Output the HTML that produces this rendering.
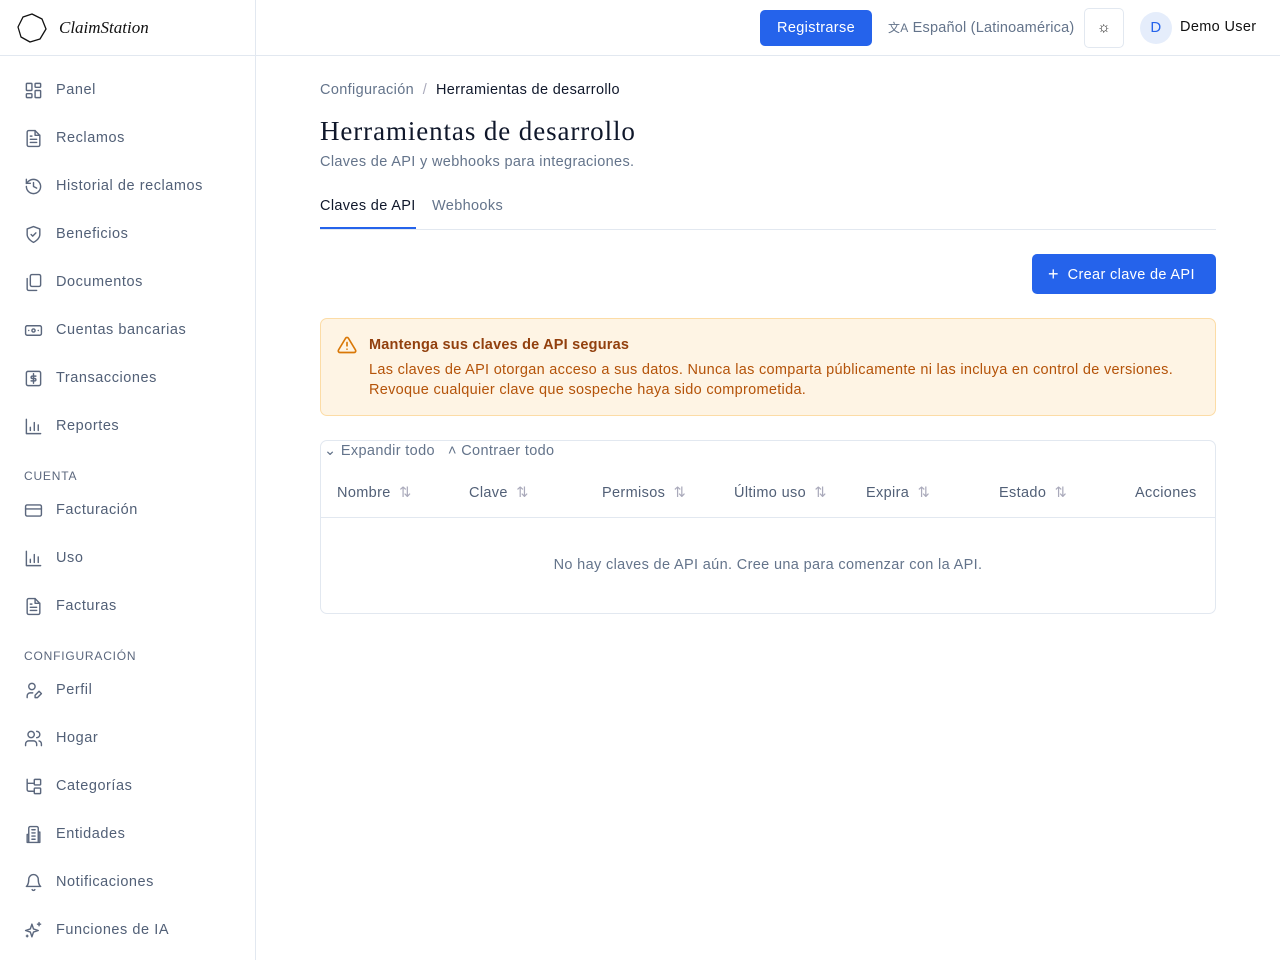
<!DOCTYPE html>
<html><head><meta charset="utf-8"><style>
*{box-sizing:border-box;margin:0;padding:0}
body{width:1280px;height:960px;font-family:"Liberation Sans",sans-serif;background:#fff;color:#0f172a;position:relative;overflow:hidden;letter-spacing:.35px}
.sb{position:absolute;left:0;top:0;width:256px;height:960px;border-right:1px solid #e2e8f0}
.logo{height:56px;border-bottom:1px solid #e2e8f0;position:relative}
.nav{position:absolute;left:24px;font-size:14.5px;color:#526077;display:flex;align-items:center;height:20px;letter-spacing:.55px}
.nav svg{width:19px;height:19px;margin-right:13px;fill:none;stroke:#5b677d;stroke-width:1.8;stroke-linecap:round;stroke-linejoin:round}
.sec{position:absolute;left:24px;font-size:12px;color:#5b677d;letter-spacing:.8px}
.top{position:absolute;left:256px;top:0;right:0;height:56px;border-bottom:1px solid #e2e8f0}
.abs{position:absolute}
.th{position:absolute;top:485px;font-size:14.5px;color:#526077;white-space:nowrap}
.th span{color:#aab;margin-left:4px}
</style></head><body>
<div class="sb">
 <div class="logo">
  <svg class="abs" style="left:16px;top:12px" width="32" height="32" viewBox="0 0 32 32" fill="none" stroke="#111" stroke-width="1.3"><path d="M16 2 L26 7 L30 17 L24 27 L14 30 L5 25 L2 15 L7 5 Z" stroke-linejoin="round"/></svg>
  <div class="abs" style="left:59px;top:18px;font-family:'Liberation Serif',serif;font-style:italic;font-size:17px;color:#111;letter-spacing:0">ClaimStation</div>
 </div>
 <div class="nav" style="top:80px"><svg viewBox="0 0 24 24"><rect x="3" y="3" width="7" height="9" rx="1"/><rect x="14" y="3" width="7" height="5" rx="1"/><rect x="14" y="12" width="7" height="9" rx="1"/><rect x="3" y="16" width="7" height="5" rx="1"/></svg>Panel</div>
 <div class="nav" style="top:128px"><svg viewBox="0 0 24 24"><path d="M14 2H6a2 2 0 0 0-2 2v16a2 2 0 0 0 2 2h12a2 2 0 0 0 2-2V8z"/><path d="M14 2v6h6M8 13h8M8 17h8M8 9h2"/></svg>Reclamos</div>
 <div class="nav" style="top:176px"><svg viewBox="0 0 24 24"><path d="M3 12a9 9 0 1 0 9-9 9.75 9.75 0 0 0-6.74 2.74L3 8"/><path d="M3 3v5h5M12 7v5l4 2"/></svg>Historial de reclamos</div>
 <div class="nav" style="top:224px"><svg viewBox="0 0 24 24"><path d="M12 22s8-4 8-10V5l-8-3-8 3v7c0 6 8 10 8 10z"/><path d="m9 12 2 2 4-4"/></svg>Beneficios</div>
 <div class="nav" style="top:272px"><svg viewBox="0 0 24 24"><rect x="8" y="2" width="13" height="15" rx="2"/><path d="M4 7v13a2 2 0 0 0 2 2h10"/></svg>Documentos</div>
 <div class="nav" style="top:320px"><svg viewBox="0 0 24 24"><rect x="2" y="6" width="20" height="12" rx="2"/><circle cx="12" cy="12" r="2"/><path d="M6 12h.01M18 12h.01"/></svg>Cuentas bancarias</div>
 <div class="nav" style="top:368px"><svg viewBox="0 0 24 24"><rect x="3" y="3" width="18" height="18" rx="2"/><path d="M12 6v12M15 9h-4.5a1.5 1.5 0 0 0 0 3h3a1.5 1.5 0 0 1 0 3H9"/></svg>Transacciones</div>
 <div class="nav" style="top:416px"><svg viewBox="0 0 24 24"><path d="M3 3v18h18M8 17v-4M13 17V7M18 17v-7"/></svg>Reportes</div>
 <div class="sec" style="top:469px">CUENTA</div>
 <div class="nav" style="top:500px"><svg viewBox="0 0 24 24"><rect x="2" y="5" width="20" height="14" rx="2"/><path d="M2 10h20"/></svg>Facturación</div>
 <div class="nav" style="top:548px"><svg viewBox="0 0 24 24"><path d="M3 3v18h18M8 17v-4M13 17V7M18 17v-7"/></svg>Uso</div>
 <div class="nav" style="top:596px"><svg viewBox="0 0 24 24"><path d="M14 2H6a2 2 0 0 0-2 2v16a2 2 0 0 0 2 2h12a2 2 0 0 0 2-2V8z"/><path d="M14 2v6h6M8 13h8M8 17h8M8 9h2"/></svg>Facturas</div>
 <div class="sec" style="top:649px">CONFIGURACIÓN</div>
 <div class="nav" style="top:680px"><svg viewBox="0 0 24 24"><circle cx="10" cy="7" r="4"/><path d="M4 21v-2a4 4 0 0 1 4-4h3M19 13l3 3-5 5h-3v-3z"/></svg>Perfil</div>
 <div class="nav" style="top:728px"><svg viewBox="0 0 24 24"><circle cx="9" cy="7" r="4"/><path d="M2 21v-2a4 4 0 0 1 4-4h6a4 4 0 0 1 4 4v2M16 3a4 4 0 0 1 0 8M22 21v-2a4 4 0 0 0-3-3.9"/></svg>Hogar</div>
 <div class="nav" style="top:776px"><svg viewBox="0 0 24 24"><path d="M4 3v13a2 2 0 0 0 2 2h6M4 8h8"/><rect x="13" y="3" width="8" height="7" rx="1"/><rect x="13" y="14" width="8" height="7" rx="1"/></svg>Categorías</div>
 <div class="nav" style="top:824px"><svg viewBox="0 0 24 24"><path d="M6 22V4a2 2 0 0 1 2-2h8a2 2 0 0 1 2 2v18zM6 12H4v10h2M18 9h2v13h-2M10 6h4M10 10h4M10 14h4M10 18h4"/></svg>Entidades</div>
 <div class="nav" style="top:872px"><svg viewBox="0 0 24 24"><path d="M6 8a6 6 0 0 1 12 0c0 7 3 9 3 9H3s3-2 3-9M10.3 21a1.94 1.94 0 0 0 3.4 0"/></svg>Notificaciones</div>
 <div class="nav" style="top:920px"><svg viewBox="0 0 24 24"><path d="M10 4l2 6 6 2-6 2-2 6-2-6-6-2 6-2zM19 2v4M17 4h4M4 18v2M3 19h2"/></svg>Funciones de IA</div>
</div>
<div class="top">
 <div class="abs" style="left:504px;top:10px;width:112px;height:36px;background:#2563eb;border-radius:5px;color:#fff;font-size:14.5px;text-align:center;line-height:36px">Registrarse</div>
 <div class="abs" style="left:632px;top:19px;font-size:14.5px;color:#64748b;letter-spacing:.2px"><span style="font-size:12px">文A</span> Español (Latinoamérica)</div>
 <div class="abs" style="left:828px;top:8px;width:40px;height:40px;border:1px solid #e2e8f0;border-radius:5px;text-align:center;line-height:38px;font-size:15px;color:#222">☼</div>
 <div class="abs" style="left:884px;top:12px;width:32px;height:32px;border-radius:50%;background:#e5edfb;color:#2563eb;text-align:center;line-height:32px;font-size:15px">D</div>
 <div class="abs" style="left:924px;top:19px;font-size:14.5px;color:#111">Demo User</div>
</div>
<div class="abs" style="left:320px;top:82px;font-size:14.5px;color:#64748b">Configuración &nbsp;<span style="color:#aab">/</span>&nbsp; <span style="color:#0f172a">Herramientas de desarrollo</span></div>
<div class="abs" style="left:320px;top:116px;font-family:'Liberation Serif',serif;font-size:27px;color:#0f172a;letter-spacing:.9px">Herramientas de desarrollo</div>
<div class="abs" style="left:320px;top:154px;font-size:14.5px;color:#64748b">Claves de API y webhooks para integraciones.</div>
<div class="abs" style="left:320px;top:229px;width:896px;height:1px;background:#e2e8f0"></div>
<div class="abs" style="left:320px;top:198px;font-size:14.5px;color:#0f172a">Claves de API</div>
<div class="abs" style="left:320px;top:227px;width:96px;height:2px;background:#2563eb"></div>
<div class="abs" style="left:432px;top:198px;font-size:14.5px;color:#64748b">Webhooks</div>
<div class="abs" style="left:1032px;top:254px;width:184px;height:40px;background:#2563eb;border-radius:5px;color:#fff;font-size:14.5px;line-height:40px;padding-left:16px"><span style="font-size:18px;vertical-align:-1px">+</span>&nbsp; Crear clave de API</div>
<div class="abs" style="left:320px;top:318px;width:896px;height:98px;background:#fef4e4;border:1px solid #fcdca6;border-radius:7px"></div>
<svg class="abs" style="left:337px;top:335px" width="20" height="20" viewBox="0 0 24 24" fill="none" stroke="#d97706" stroke-width="2" stroke-linecap="round" stroke-linejoin="round"><path d="M10.3 3.9 1.8 18a2 2 0 0 0 1.7 3h17a2 2 0 0 0 1.7-3L13.7 3.9a2 2 0 0 0-3.4 0zM12 9v4M12 17h.01"/></svg>
<div class="abs" style="left:369px;top:337px;font-size:14.5px;color:#92400e;font-weight:bold;letter-spacing:.2px">Mantenga sus claves de API seguras</div>
<div class="abs" style="left:369px;top:360px;font-size:14.5px;color:#b45309;line-height:20px;letter-spacing:.3px">Las claves de API otorgan acceso a sus datos. Nunca las comparta públicamente ni las incluya en control de versiones.<br>Revoque cualquier clave que sospeche haya sido comprometida.</div>
<div class="abs" style="left:320px;top:440px;width:896px;height:174px;border:1px solid #e2e8f0;border-radius:7px"></div>
<div class="abs" style="left:324px;top:443px;font-size:14.5px;color:#64748b">⌄ Expandir todo &nbsp; ˄ Contraer todo</div>
<div class="abs" style="left:321px;top:517px;width:894px;height:1px;background:#e2e8f0"></div>
<div class="th" style="left:337px">Nombre <span>⇅</span></div>
<div class="th" style="left:469px">Clave <span>⇅</span></div>
<div class="th" style="left:602px">Permisos <span>⇅</span></div>
<div class="th" style="left:734px">Último uso <span>⇅</span></div>
<div class="th" style="left:866px">Expira <span>⇅</span></div>
<div class="th" style="left:999px">Estado <span>⇅</span></div>
<div class="th" style="left:1135px">Acciones</div>
<div class="abs" style="top:557px;left:320px;width:896px;text-align:center;font-size:14.5px;color:#64748b">No hay claves de API aún. Cree una para comenzar con la API.</div>
</body></html>
